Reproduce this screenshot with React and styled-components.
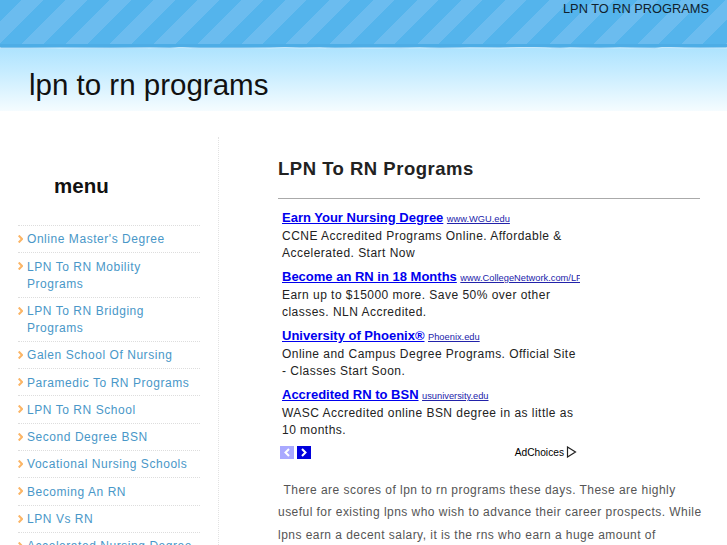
import styled, { createGlobalStyle } from "styled-components";

const menuItems = [
  "Online Master's Degree",
  "LPN To RN Mobility Programs",
  "LPN To RN Bridging Programs",
  "Galen School Of Nursing",
  "Paramedic To RN Programs",
  "LPN To RN School",
  "Second Degree BSN",
  "Vocational Nursing Schools",
  "Becoming An RN",
  "LPN Vs RN",
  "Accelerated Nursing Degree",
];

const ads = [
  {
    title: "Earn Your Nursing Degree",
    url: "www.WGU.edu",
    text: "CCNE Accredited Programs Online. Affordable & Accelerated. Start Now",
  },
  {
    title: "Become an RN in 18 Months",
    url: "www.CollegeNetwork.com/LPN",
    text: "Earn up to $15000 more. Save 50% over other classes. NLN Accredited.",
  },
  {
    title: "University of Phoenix®",
    url: "Phoenix.edu",
    text: "Online and Campus Degree Programs. Official Site - Classes Start Soon.",
  },
  {
    title: "Accredited RN to BSN",
    url: "usuniversity.edu",
    text: "WASC Accredited online BSN degree in as little as 10 months.",
  },
];

const GlobalStyle = createGlobalStyle`
  html, body {
    margin: 0;
    padding: 0;
    background: #fff;
    height: 545px;
    overflow: hidden;
    font-family: "Liberation Sans", Arial, sans-serif;
  }
`;

const Page = styled.div`
  width: 727px;
  height: 545px;
  overflow: hidden;
`;

const TopBand = styled.div`
  height: 47px;
  display: flex;
  justify-content: flex-end;
  padding-right: 18px;
  box-sizing: border-box;
  background-color: #4dade6;
  background-image: repeating-linear-gradient(
    -45deg,
    #6bbcef 17px,
    #6bbcef 32px,
    #54b4ec 32px,
    #54b4ec 48.11px
  );
  background-size: 100% 44px;
  background-repeat: no-repeat;
`;

const TopLink = styled.a`
  font-size: 12.8px;
  line-height: 17px;
  color: #10222e;
`;

const Edge = styled.svg`
  display: block;
  width: 727px;
  height: 3px;
`;

const TitleBand = styled.div`
  height: 61px;
  padding-left: 29px;
  background: linear-gradient(#b0e4fe 0, #c6ecff 35%, #f5fcff 100%);
`;

const SiteTitle = styled.h1`
  margin: 0;
  padding-top: 17px;
  font-size: 29.5px;
  line-height: 36px;
  font-weight: normal;
  color: #111;
`;

const Body = styled.div`
  display: flex;
  padding-top: 26px;
`;

const Sidebar = styled.aside`
  width: 200px;
  height: 420px;
  padding-left: 18px;
  border-right: 1px dotted #e2e2e2;
  flex: none;
`;

const MenuTitle = styled.h2`
  margin: 0;
  padding: 36px 0 26px 36px;
  font-size: 20.5px;
  line-height: 26px;
  font-weight: bold;
  color: #111;
`;

const MenuList = styled.ul`
  margin: 0;
  padding: 0;
  width: 182px;
  list-style: none;
  border-top: 1px dotted #ddd;
`;

const MenuItem = styled.li`
  position: relative;
  padding: 5.4px 5px 3.9px 9px;
  border-bottom: 1px dotted #ddd;
  font-size: 12px;
  line-height: 17px;
  letter-spacing: 0.55px;
  color: #4997c8;
`;

const Chevron = styled.svg`
  position: absolute;
  left: 0;
  top: 9px;
  width: 5px;
  height: 8px;
`;

const Main = styled.main`
  margin-left: 59px;
  width: 422px;
`;

const Heading = styled.h2`
  margin: 0;
  padding-top: 20px;
  height: 41px;
  font-size: 18.5px;
  line-height: 24px;
  letter-spacing: 0.5px;
  font-weight: bold;
  color: #222;
  border-bottom: 1px solid #aaa;
`;

const AdBlock = styled.div`
  width: 300px;
  margin: 9px 0 0 2px;
  overflow: hidden;
`;

const Ad = styled.div`
  margin-bottom: 4.4px;
  padding-left: 2px;
`;

const AdHead = styled.div`
  white-space: nowrap;
  line-height: 18px;
`;

const AdTitle = styled.a`
  font-size: 13px;
  font-weight: bold;
  color: #0000ee;
  text-decoration: underline;
`;

const AdUrl = styled.a`
  margin-left: 3.5px;
  font-size: 9.3px;
  color: #2222aa;
  text-decoration: underline;
`;

const AdText = styled.div`
  font-size: 12px;
  line-height: 17.3px;
  letter-spacing: 0.47px;
  color: #222;
`;

const AdFooter = styled.div`
  display: flex;
  align-items: center;
  height: 14px;
  margin-top: 5.5px;
`;

const NavButton = styled.div`
  width: 14px;
  height: 13px;
  margin-right: 3px;
  background: ${(p) => (p.$dim ? "#a9a9ff" : "#0000dd")};
  display: flex;
  align-items: center;
  justify-content: center;
`;

const AdChoices = styled.div`
  margin-left: auto;
  margin-right: 3px;
  display: flex;
  align-items: center;
  gap: 2px;
  font-size: 10.2px;
  color: #000;
`;

const Paragraph = styled.p`
  margin: 19.5px -4px 0 0;
  text-indent: 5.5px;
  font-size: 12px;
  line-height: 22.5px;
  letter-spacing: 0.46px;
  color: #555;
`;

const App = () => {
  return (
    <Page>
      <GlobalStyle />
      <TopBand>
        <TopLink>LPN TO RN PROGRAMS</TopLink>
      </TopBand>
      <Edge viewBox="0 0 727 3" preserveAspectRatio="none">
        <rect width="727" height="3" fill="#b0e4fe" />
        <path
          d="M0 0H727V1L700 1.3 685 1 672 0.6 664 0.2 655 1.6 640 1.3 620 0.8 600 1.5 570 0.8 560 1.5 545 0.8 527 0.3 500 1.1 470 0.8 440 1.5 420 0.8 400 1.2 380 1.1 364 1.1 335 1.5 320 0.8 300 1.1 285 0.5 270 1.1 240 1.5 200 1.5 180 0.4 170 1.5 150 0.9 110 1.5 60 1.1 30 1.5 0 1.5Z"
          fill="#4dade6"
          stroke="#dff4ff"
          strokeWidth="0.6"
        />
      </Edge>
      <TitleBand>
        <SiteTitle>lpn to rn programs</SiteTitle>
      </TitleBand>
      <Body>
        <Sidebar>
          <MenuTitle>menu</MenuTitle>
          <MenuList>
            {menuItems.map((item) => (
              <MenuItem key={item}>
                <Chevron viewBox="0 0 5 8">
                  <path d="M0.7 0.5L4 4 0.7 7.5" fill="none" stroke="#fbb566" strokeWidth="2" />
                </Chevron>
                {item}
              </MenuItem>
            ))}
          </MenuList>
        </Sidebar>
        <Main>
          <Heading>LPN To RN Programs</Heading>
          <AdBlock>
            {ads.map((ad) => (
              <Ad key={ad.title}>
                <AdHead>
                  <AdTitle>{ad.title}</AdTitle>
                  <AdUrl>{ad.url}</AdUrl>
                </AdHead>
                <AdText>{ad.text}</AdText>
              </Ad>
            ))}
            <AdFooter>
              <NavButton $dim>
                <svg width="6" height="9" viewBox="0 0 6 9">
                  <path d="M5 1L1.5 4.5 5 8" fill="none" stroke="#fff" strokeWidth="2" />
                </svg>
              </NavButton>
              <NavButton>
                <svg width="6" height="9" viewBox="0 0 6 9">
                  <path d="M1 1L4.5 4.5 1 8" fill="none" stroke="#fff" strokeWidth="2" />
                </svg>
              </NavButton>
              <AdChoices>
                AdChoices
                <svg width="11" height="12" viewBox="0 0 11 12">
                  <path d="M1.5 1L9.5 6 1.5 11Z" fill="none" stroke="#222" strokeWidth="1.2" />
                </svg>
              </AdChoices>
            </AdFooter>
          </AdBlock>
          <Paragraph>
            There are scores of lpn to rn programs these days. These are highly useful for existing
            lpns who wish to advance their career prospects. While lpns earn a decent salary, it is
            the rns who earn a huge amount of
          </Paragraph>
        </Main>
      </Body>
    </Page>
  );
};

export default App;
